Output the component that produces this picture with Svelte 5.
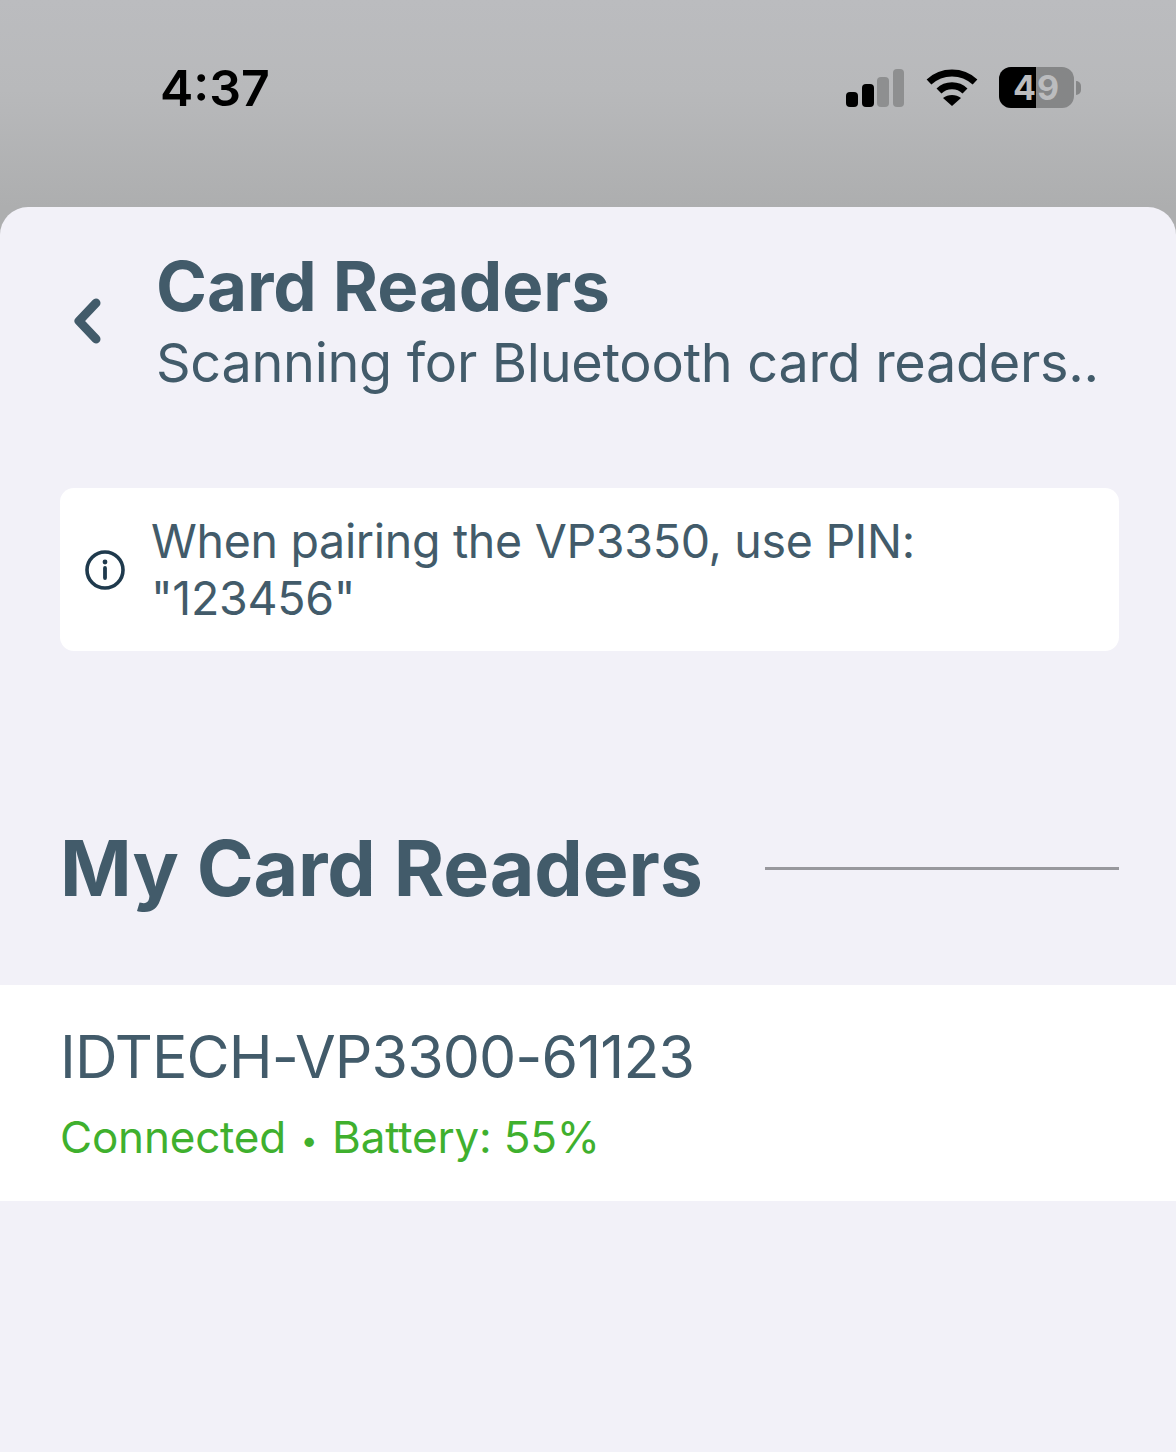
<script>
  const header = { title: "Card Readers", subtitle: "Scanning for Bluetooth card readers.." };
  const reader = { name: "IDTECH-VP3300-61123", status: "Connected", battery: 55 };
</script>

<div class="screen">
  <div class="statusbar">
    <span class="time">4:37</span>
    <div class="icons">
      <svg class="signal" width="58" height="38" viewBox="0 0 58 38">
        <rect x="0" y="23" width="12" height="15" rx="4" fill="#000" />
        <rect x="16" y="15" width="12" height="23" rx="4" fill="#000" />
        <rect x="31" y="8" width="12" height="30" rx="4" fill="#8e8f90" />
        <rect x="47" y="0" width="11" height="38" rx="4" fill="#8e8f90" />
      </svg>
      <svg class="wifi" width="52" height="38" viewBox="0 0 52 38">
        <path d="M3 13 C16 1 36 1 49 13" fill="none" stroke="#000" stroke-width="7" />
        <path d="M13 22 C20 15 32 15 39 22" fill="none" stroke="#000" stroke-width="7" />
        <path d="M26 37 L17 29 C22 25 30 25 35 29 Z" fill="#000" />
      </svg>
      <div class="battery">
        <div class="cell">
          <span class="fill"></span>
          <span class="level">49</span>
        </div>
        <span class="nub"></span>
      </div>
    </div>
  </div>

  <main class="sheet">
    <header class="head">
      <button class="back" aria-label="Back">
        <svg width="30" height="46" viewBox="0 0 30 46">
          <path d="M23 5 L6 23 L23 41" fill="none" stroke="#425b6a" stroke-width="9" stroke-linecap="round" stroke-linejoin="round" />
        </svg>
      </button>
      <div class="titles">
        <h1>{header.title}</h1>
        <p>{header.subtitle}</p>
      </div>
    </header>

    <div class="notice">
      <svg width="40" height="40" viewBox="0 0 40 40">
        <circle cx="20" cy="20" r="18" fill="none" stroke="#1f3a4d" stroke-width="3.6" />
        <circle cx="20" cy="12" r="2.4" fill="#1f3a4d" />
        <path d="M20 18 V28" stroke="#1f3a4d" stroke-width="3.8" stroke-linecap="round" />
      </svg>
      <span>When pairing the VP3350, use PIN:<br />"123456"</span>
    </div>

    <div class="section">
      <h2>My Card Readers</h2>
      <span class="rule"></span>
    </div>

    <div class="row">
      <div class="name">{reader.name}</div>
      <div class="status">{reader.status}<span class="dot">•</span>Battery: {reader.battery}%</div>
    </div>
  </main>
</div>

<style>
  :global(body) {
    background: #f2f1f8;
  }
  .screen {
    width: 1176px;
    height: 1452px;
    overflow: hidden;
    display: flex;
    flex-direction: column;
    background: linear-gradient(#bbbcbf 0, #b8b9bb 90px, #adaeaf 207px, #adaeaf 100%);
    font-family: Inter, "Liberation Sans", sans-serif;
    color: #425b6a;
  }
  .statusbar {
    flex: none;
    height: 207px;
    box-sizing: border-box;
    padding: 59px 95px 0 160px;
    display: flex;
    justify-content: space-between;
    align-items: flex-start;
  }
  .time {
    font-size: 50px;
    line-height: 58px;
    font-weight: 600;
    color: #000;
  }
  .icons {
    display: flex;
    align-items: center;
    gap: 21px;
    padding-top: 8px;
  }
  .signal {
    margin-right: 1px;
  }
  .battery {
    display: flex;
    align-items: center;
    gap: 2px;
  }
  .cell {
    position: relative;
    width: 75px;
    height: 41px;
    border-radius: 12px;
    background: #858687;
    overflow: hidden;
    display: flex;
    align-items: center;
    justify-content: center;
  }
  .fill {
    position: absolute;
    left: 0;
    top: 0;
    bottom: 0;
    width: 37px;
    background: #000;
  }
  .level {
    position: relative;
    font-size: 34px;
    font-weight: 700;
    color: #bbbcbe;
    letter-spacing: 1px;
  }
  .nub {
    width: 5px;
    height: 14px;
    border-radius: 0 7px 7px 0;
    background: #858687;
  }
  .sheet {
    flex: 1;
    background: #f2f1f8;
    border-radius: 28px 28px 0 0;
  }
  .head {
    display: flex;
    align-items: center;
    padding: 37px 60px 0 68px;
  }
  .back {
    flex: none;
    width: 88px;
    padding: 0 0 0 5px;
    box-sizing: border-box;
    border: 0;
    background: none;
    display: flex;
    margin-top: 2px;
  }
  .titles {
    min-width: 0;
  }
  h1 {
    margin: 0;
    font-size: 69px;
    line-height: 84px;
    font-weight: 700;
    letter-spacing: -0.1px;
  }
  .titles p {
    margin: 2px 0 0;
    font-size: 54px;
    line-height: 66px;
    white-space: nowrap;
    letter-spacing: -0.3px;
  }
  .notice {
    margin: 92px 57px 0 60px;
    min-height: 163px;
    box-sizing: border-box;
    padding: 0 24px 0 25px;
    background: #fff;
    border-radius: 14px;
    display: flex;
    align-items: center;
    gap: 26px;
    font-size: 46.5px;
    line-height: 57px;
    letter-spacing: -0.3px;
  }
  .section {
    margin: 167px 57px 0 60px;
    display: flex;
    align-items: center;
    gap: 62px;
  }
  h2 {
    margin: 0;
    font-size: 77px;
    line-height: 100px;
    font-weight: 700;
    letter-spacing: -0.15px;
    white-space: nowrap;
  }
  .rule {
    flex: 1;
    height: 3px;
    background: #98989d;
  }
  .row {
    margin-top: 67px;
    height: 216px;
    box-sizing: border-box;
    padding: 36px 60px 0;
    background: #fff;
  }
  .name {
    font-size: 59px;
    line-height: 72px;
    letter-spacing: -0.9px;
  }
  .status {
    margin-top: 17px;
    font-size: 44px;
    line-height: 54px;
    letter-spacing: -0.2px;
    color: #3fb02e;
  }
  .dot {
    display: inline-block;
    width: 46px;
    text-align: center;
    font-size: 30px;
    vertical-align: 2px;
  }
</style>
